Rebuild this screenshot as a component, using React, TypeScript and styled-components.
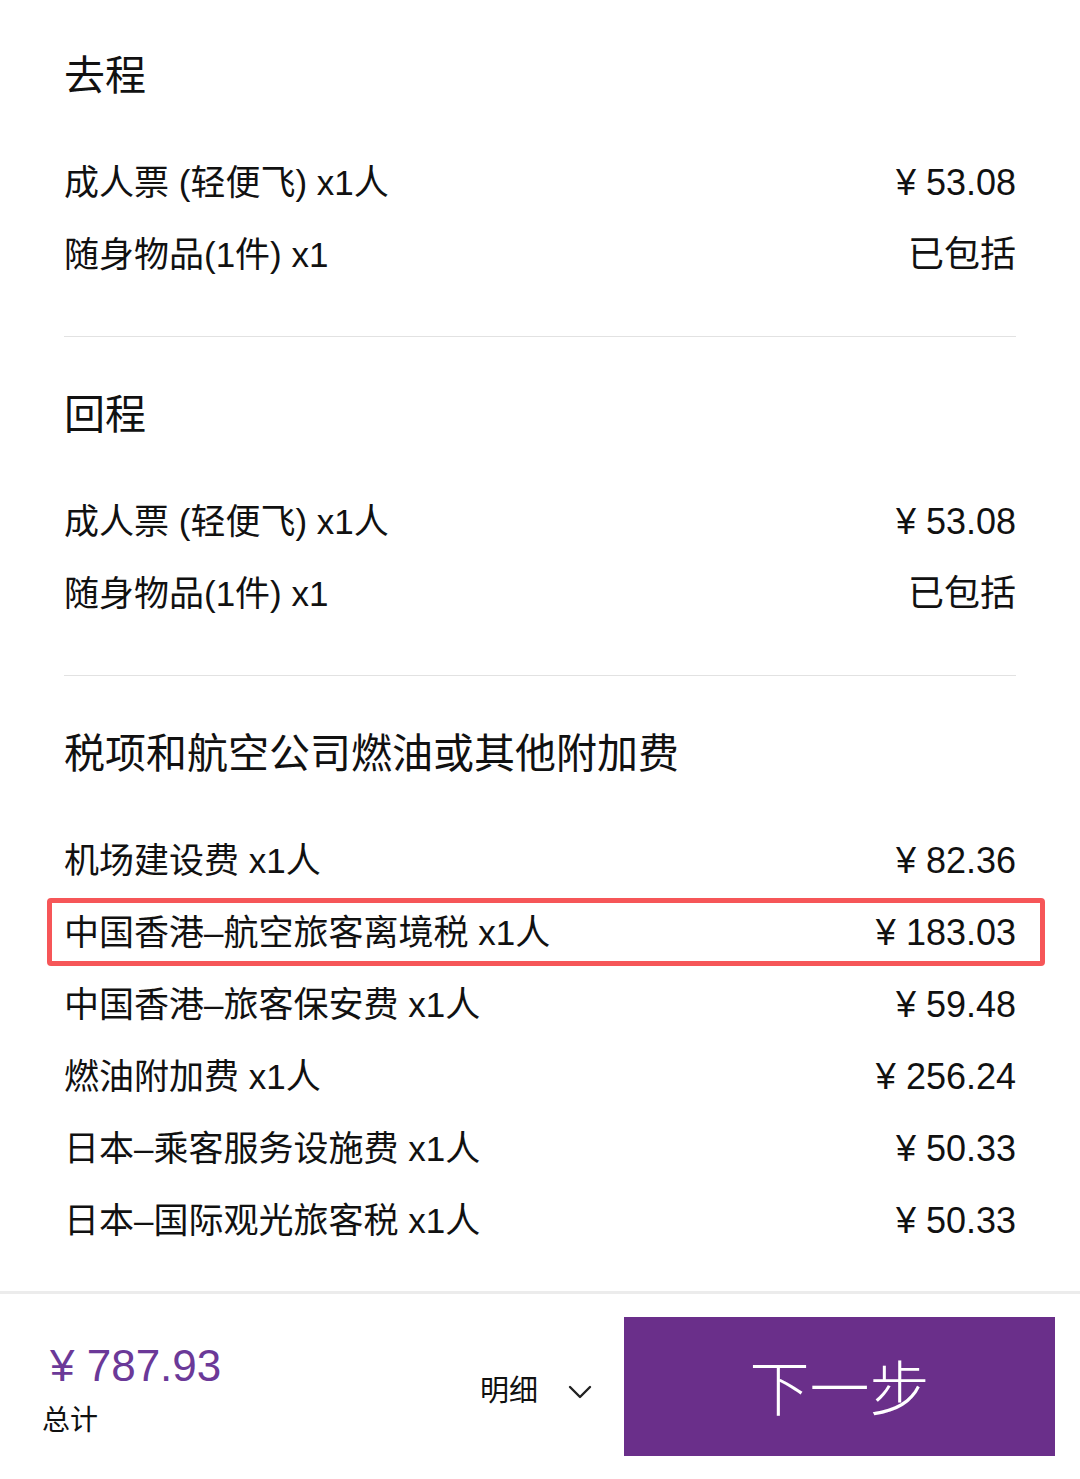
import React from 'react'
import styled, { createGlobalStyle } from 'styled-components'

type Line = { label: string; price: string; highlight?: boolean }
type Group = { title: string; lines: Line[] }

const groups: Group[] = [
  {
    title: '去程',
    lines: [
      { label: '成人票 (轻便飞) x1人', price: '¥ 53.08' },
      { label: '随身物品(1件) x1', price: '已包括' },
    ],
  },
  {
    title: '回程',
    lines: [
      { label: '成人票 (轻便飞) x1人', price: '¥ 53.08' },
      { label: '随身物品(1件) x1', price: '已包括' },
    ],
  },
  {
    title: '税项和航空公司燃油或其他附加费',
    lines: [
      { label: '机场建设费 x1人', price: '¥ 82.36' },
      { label: '中国香港–航空旅客离境税 x1人', price: '¥ 183.03', highlight: true },
      { label: '中国香港–旅客保安费 x1人', price: '¥ 59.48' },
      { label: '燃油附加费 x1人', price: '¥ 256.24' },
      { label: '日本–乘客服务设施费 x1人', price: '¥ 50.33' },
      { label: '日本–国际观光旅客税 x1人', price: '¥ 50.33' },
    ],
  },
]

const App: React.FC = () => {
  return (
    <>
      <GlobalStyle />
      <Page>
        <Details>
          {groups.map((g, i) => (
            <Section key={i} $last={i === groups.length - 1}>
              <Heading>{g.title}</Heading>
              <Lines>
                {g.lines.map((l, j) => (
                  <Row key={j} $highlight={l.highlight}>
                    <span>{l.label}</span>
                    <Price>{l.price}</Price>
                  </Row>
                ))}
              </Lines>
            </Section>
          ))}
        </Details>
        <Footer>
          <Total>
            <TotalPrice>¥ 787.93</TotalPrice>
            <TotalLabel>总计</TotalLabel>
          </Total>
          <Toggle>
            明细
            <svg width="24" height="14" viewBox="0 0 24 14" fill="none">
              <path d="M2 2l10 10L22 2" stroke="#222" strokeWidth="2.4" strokeLinecap="round" strokeLinejoin="round" />
            </svg>
          </Toggle>
          <NextButton>下一步</NextButton>
        </Footer>
      </Page>
    </>
  )
}

export default App

const GlobalStyle = createGlobalStyle`
  body {
    margin: 0;
    background: #fff;
    font-family: 'Liberation Sans', 'Noto Sans CJK SC', sans-serif;
    color: #111;
  }
`

const Page = styled.div`
  width: 1080px;
  height: 1479px;
  display: flex;
  flex-direction: column;
  overflow: hidden;
`

const Details = styled.div`
  flex: 1;
  padding: 0 64px;
`

const Section = styled.section<{ $last?: boolean }>`
  padding: 40px 0 ${(p) => (p.$last ? '0' : '45px')};
  border-bottom: ${(p) => (p.$last ? 'none' : '1px solid #e2e2e2')};
  & + & {
    padding-top: 42px;
  }
`

const Heading = styled.h2`
  margin: 0 0 35px;
  font-size: 41px;
  font-weight: 400;
  line-height: 72px;
`

const Lines = styled.div`
  display: flex;
  flex-direction: column;
`

const Row = styled.div<{ $highlight?: boolean }>`
  position: relative;
  display: flex;
  justify-content: space-between;
  align-items: center;
  height: 72px;
  font-size: 35px;
  line-height: 72px;
  &::after {
    content: '';
    display: ${(p) => (p.$highlight ? 'block' : 'none')};
    position: absolute;
    top: 1px;
    bottom: 3px;
    left: -17px;
    right: -29px;
    border: 5px solid #f65658;
    border-radius: 4px;
    pointer-events: none;
  }
`

const Price = styled.span`
  white-space: pre;
  font-size: 36px;
`

const Footer = styled.footer`
  height: 188px;
  box-sizing: border-box;
  display: flex;
  align-items: flex-start;
  padding: 23px 25px 0 42px;
  border-top: 3px solid #ececec;
`

const Total = styled.div`
  display: flex;
  flex-direction: column;
  padding-top: 24px;
`

const TotalPrice = styled.div`
  margin-left: 8px;
  color: #6b3998;
  font-size: 44px;
  line-height: 50px;
`

const TotalLabel = styled.div`
  margin-top: 10px;
  font-size: 28px;
  line-height: 40px;
`

const Toggle = styled.div`
  margin-left: auto;
  margin-top: 54px;
  display: flex;
  align-items: center;
  gap: 30px;
  font-size: 29px;
  line-height: 40px;
  svg {
    margin-top: 2px;
  }
`

const NextButton = styled.button`
  margin-left: 32px;
  width: 431px;
  height: 139px;
  border: none;
  border-radius: 0;
  background: #6a2f8a;
  color: #fff;
  font-family: 'Noto Sans CJK SC', sans-serif;
  font-size: 60px;
  font-weight: 300;
  padding: 0 0 4px;
`
